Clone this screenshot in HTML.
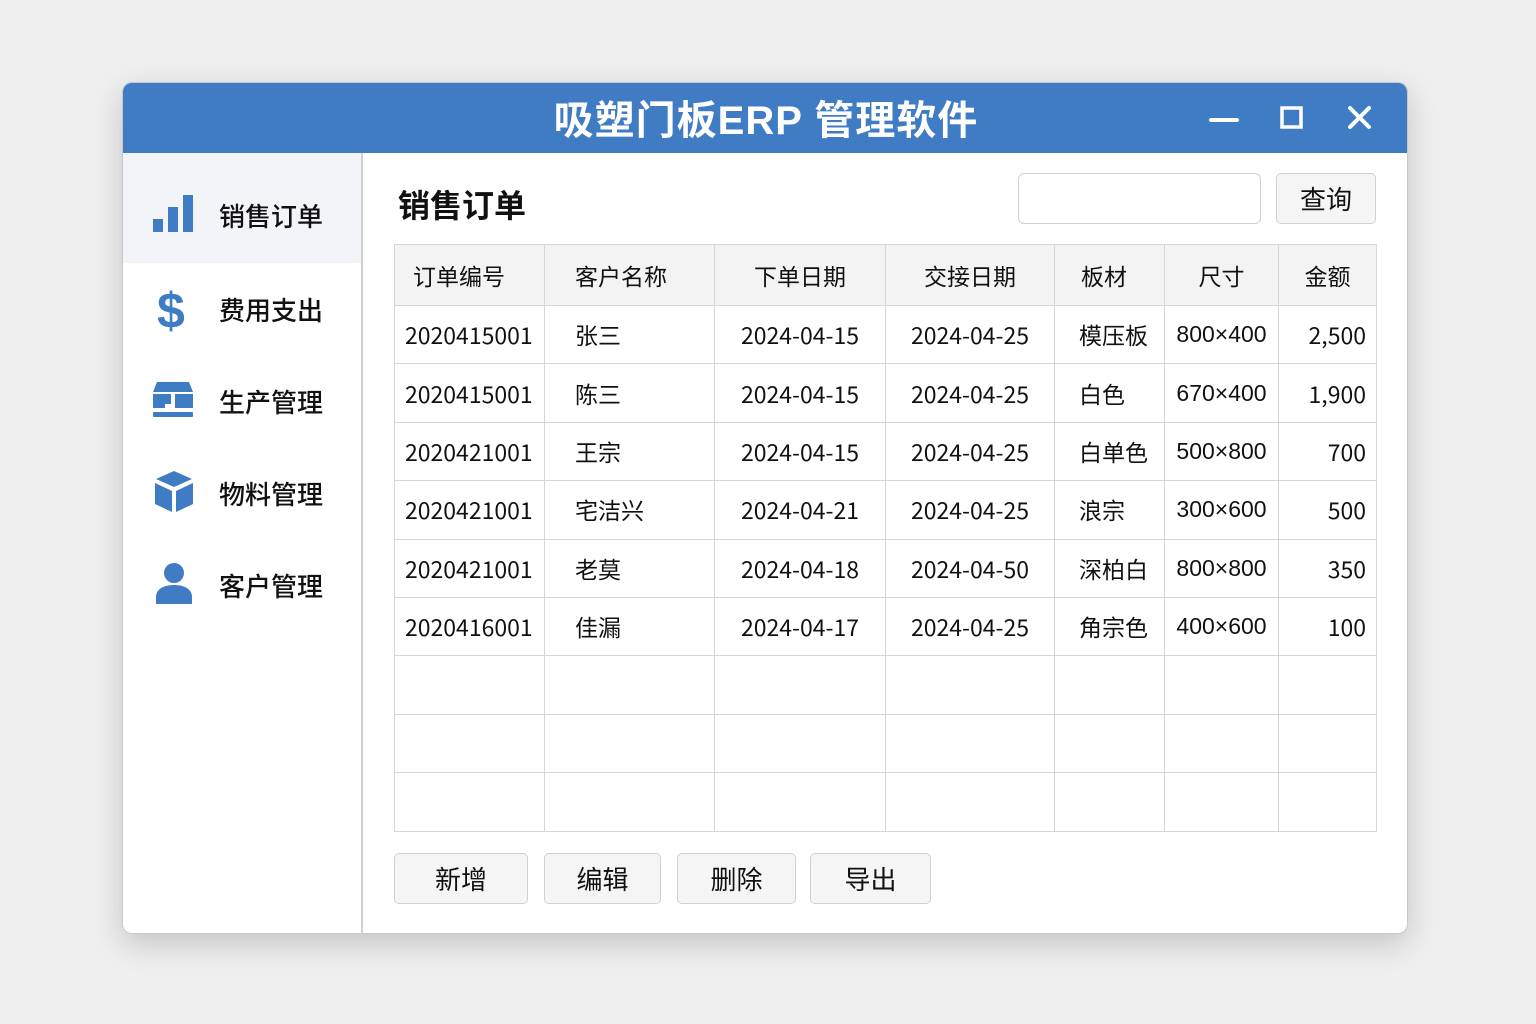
<!DOCTYPE html>
<html><head><meta charset="utf-8"><style>
*{margin:0;padding:0;box-sizing:border-box}
body{width:1536px;height:1024px;background:#efefef;font-family:"Liberation Sans","Noto Sans CJK SC",sans-serif;position:relative;overflow:hidden;color:#111}
.win{position:absolute;left:122px;top:82px;width:1286px;height:852px;background:#fff;border-radius:10px;overflow:hidden;box-shadow:0 10px 30px rgba(0,0,0,.18);border:1px solid #c9c9c9}
.tb{position:absolute;left:0;top:0;width:100%;height:70px;background:#3f7cc3}
.title{position:absolute;left:0;width:1286px;top:5px;text-align:center;color:#fff;font-size:40px;font-weight:bold;letter-spacing:1px}
.side{position:absolute;left:0;top:70px;width:240px;height:782px;border-right:2px solid #d0d0d0;background:#fff}
.act{position:absolute;left:0;top:0;width:238px;height:110px;background:#f3f4f7}
.item{position:absolute;left:96px;font-size:26px;font-weight:500}
.ic{position:absolute}
.h{position:absolute;left:275px;top:98px;font-size:32px;font-weight:bold}
.inp{position:absolute;left:895px;top:90px;width:243px;height:51px;border:1px solid #d0d0d0;border-radius:6px}
.btn{position:absolute;height:51px;border:1px solid #d0d0d0;border-radius:5px;background:#f5f5f5;font-size:26px;text-align:center;line-height:49px;font-family:"Noto Sans CJK SC",sans-serif}
table{position:absolute;left:271px;top:161px;width:982px;table-layout:fixed;border-collapse:collapse;font-size:23px;font-family:"Noto Sans CJK SC",sans-serif}
td{border:1px solid #d6d6d6;height:58.4px;padding:0 10px;white-space:nowrap;overflow:hidden;line-height:1;vertical-align:middle}
td.s{font-family:"Liberation Sans",sans-serif;font-size:23px;text-align:center;padding:0 4px}
tr.hd td{background:#f3f3f3;height:61px}
</style></head><body>
<div class="win">
<div class="tb"><div class="title">吸塑门板ERP 管理软件</div>
<svg style="position:absolute;left:1086px;top:20px" width="180" height="32" viewBox="0 0 180 32"><path d="M2 17H28" stroke="#fff" stroke-width="4" stroke-linecap="round"/><rect x="73" y="5" width="19" height="19" fill="none" stroke="#fff" stroke-width="3.5"/><path d="M141 5L160 24M160 5L141 24" stroke="#fff" stroke-width="4" stroke-linecap="round"/></svg>
</div>
<div class="side">
<div class="act"></div>
<svg class="ic" style="left:30px;top:42px" width="42" height="38"><rect x="0" y="24" width="10" height="13" fill="#3f7cc3"/><rect x="15" y="12" width="10" height="25" fill="#3f7cc3"/><rect x="30" y="0" width="10" height="37" fill="#3f7cc3"/></svg>
<div class="item" style="top:44px">销售订单</div>
<div class="ic" style="left:34px;top:130px;color:#3f7cc3;font-size:50px;font-weight:bold;line-height:56px">$</div>
<div class="item" style="top:138px">费用支出</div>
<svg class="ic" style="left:30px;top:229px" width="40" height="38"><path d="M4 0H36L40 10H0Z" fill="#3f7cc3"/><path d="M0 12H18V22H12V26H0Z M22 12H40V26H22Z" fill="#3f7cc3"/><rect x="0" y="30" width="40" height="5" rx="1" fill="#3f7cc3"/></svg>
<div class="item" style="top:230px">生产管理</div>
<svg class="ic" style="left:32px;top:318px" width="38" height="42"><path d="M19 0L37 8L19 16L1 8Z" fill="#3f7cc3"/><path d="M0 12L17 20V41L0 33Z M38 12L21 20V41L38 33Z" fill="#3f7cc3"/></svg>
<div class="item" style="top:322px">物料管理</div>
<svg class="ic" style="left:32px;top:410px" width="38" height="42"><circle cx="19" cy="10" r="10" fill="#3f7cc3"/><path d="M1 41V34C1 26 9 22 19 22S37 26 37 34V41Z" fill="#3f7cc3"/></svg>
<div class="item" style="top:414px">客户管理</div>
</div>
<div class="h">销售订单</div>
<div class="inp"></div>
<div class="btn" style="left:1153px;top:90px;width:100px">查询</div>
<table>
<colgroup><col style="width:150px"><col style="width:170px"><col style="width:171px"><col style="width:169px"><col style="width:110px"><col style="width:114px"><col style="width:98px"></colgroup>
<tr class="hd"><td style="padding-left:18px">订单编号</td><td style="padding-left:30px">客户名称</td><td style="text-align:center">下单日期</td><td style="text-align:center">交接日期</td><td style="padding-left:26px">板材</td><td style="text-align:center">尺寸</td><td style="text-align:center">金额</td></tr>
<tr><td>2020415001</td><td style="padding-left:30px">张三</td><td style="text-align:center">2024-04-15</td><td style="text-align:center">2024-04-25</td><td style="padding-left:24px">模压板</td><td class="s">800×400</td><td style="text-align:right">2,500</td></tr>
<tr><td>2020415001</td><td style="padding-left:30px">陈三</td><td style="text-align:center">2024-04-15</td><td style="text-align:center">2024-04-25</td><td style="padding-left:24px">白色</td><td class="s">670×400</td><td style="text-align:right">1,900</td></tr>
<tr><td>2020421001</td><td style="padding-left:30px">王宗</td><td style="text-align:center">2024-04-15</td><td style="text-align:center">2024-04-25</td><td style="padding-left:24px">白单色</td><td class="s">500×800</td><td style="text-align:right">700</td></tr>
<tr><td>2020421001</td><td style="padding-left:30px">宅洁兴</td><td style="text-align:center">2024-04-21</td><td style="text-align:center">2024-04-25</td><td style="padding-left:24px">浪宗</td><td class="s">300×600</td><td style="text-align:right">500</td></tr>
<tr><td>2020421001</td><td style="padding-left:30px">老莫</td><td style="text-align:center">2024-04-18</td><td style="text-align:center">2024-04-50</td><td style="padding-left:24px">深柏白</td><td class="s">800×800</td><td style="text-align:right">350</td></tr>
<tr><td>2020416001</td><td style="padding-left:30px">佳漏</td><td style="text-align:center">2024-04-17</td><td style="text-align:center">2024-04-25</td><td style="padding-left:24px">角宗色</td><td class="s">400×600</td><td style="text-align:right">100</td></tr>
<tr><td></td><td></td><td></td><td></td><td></td><td></td><td></td></tr>
<tr><td></td><td></td><td></td><td></td><td></td><td></td><td></td></tr>
<tr><td style="height:53px"></td><td></td><td></td><td></td><td></td><td></td><td></td></tr>
</table>
<div class="btn" style="left:271px;top:770px;width:134px">新增</div>
<div class="btn" style="left:421px;top:770px;width:117px">编辑</div>
<div class="btn" style="left:554px;top:770px;width:119px">删除</div>
<div class="btn" style="left:687px;top:770px;width:121px">导出</div>
</div>
</body></html>
